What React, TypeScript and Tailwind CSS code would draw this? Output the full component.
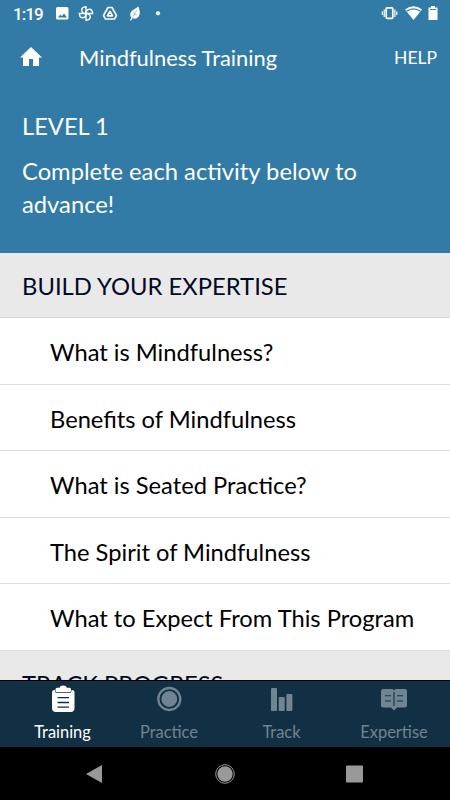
import { ReactNode } from "react";

const activities = [
  "What is Mindfulness?",
  "Benefits of Mindfulness",
  "What is Seated Practice?",
  "The Spirit of Mindfulness",
  "What to Expect From This Program",
];

const StatusBar = () => (
  <div className="flex h-7 items-center pl-[13px] pr-3">
    <span className="w-[43px] font-['Roboto',sans-serif] text-[17px] leading-7 font-medium tracking-[-0.900px]">
      1:19
    </span>
    <svg width="105" height="28" viewBox="56 0 105 28" fill="none">
      <path
        fill="#fff"
        fillRule="evenodd"
        d="M57.5 7h9.500q1.500 0 1.500 1.500v9.500q0 1.500-1.500 1.500h-9.500q-1.500 0-1.500-1.500v-9.500q0-1.500 1.500-1.500zM58 17.500h9l-3-4-2.200 2.700-1.500-1.700z"
      />
      <g stroke="#fff" strokeWidth="1.400">
        {[0, 90, 180, 270].map((angle) => (
          <path
            key={angle}
            transform={`rotate(${angle} 86 13.500)`}
            d="M86 13.500V6.800q-4.300.3-4.300 3.400 0 2.200 2.500 3.300H86"
          />
        ))}
      </g>
      <g stroke="#fff" strokeLinejoin="round">
        <path strokeWidth="1.600" d="M108 7.500h4l4.500 8-2 3.500h-9l-2-3.500z" />
        <path strokeWidth="1.700" d="M110 11.500l2.500 4.300h-5z" />
      </g>
      <path
        fill="#fff"
        d="M138.300 6.500q2.500 5.500.7 9.500-2.200 3.700-6.500 2.300l-1.500 2.500-1-.6 1.200-2.400q-2.400-4.300 1-7.300 2.800-1.500 6.100-4z"
      />
      <path stroke="#327ba6" strokeWidth=".4" d="M132.300 17.500l4.700-7.500M134 12v2.700M137 14.800h-3" />
      <circle cx="158" cy="13.300" r="2.100" fill="#fff" />
    </svg>
    <svg
      className="ml-auto"
      width="57"
      height="28"
      viewBox="381 0 57 28"
      fill="none"
    >
      <rect x="386.200" y="7.800" width="6.600" height="10.500" rx=".8" stroke="#fff" strokeWidth="1.700" />
      <path
        stroke="#fff"
        strokeWidth="1.200"
        d="M384.200 9.500v7.500M382.300 11.500v3.500M394.900 9.500v7.500M396.800 11.500v3.500"
      />
      <path fill="#fff" d="M413.500 20l-8.500-10.500q8.500-6.500 17 0z" />
      <path stroke="#327ba6" strokeWidth="1.200" d="M406.500 11.300q7-4.800 14 0" />
      <path
        fill="#fff"
        d="M431 6h4v1.500h2q.5 0 .5.500v11.500q0 .5-.5.500h-8q-.5 0-.5-.5V8q0-.5.500-.5h2z"
      />
      <path stroke="#327ba6" strokeWidth=".9" d="M430 9.500h6" />
    </svg>
  </div>
);

const Tab = ({
  label,
  active,
  className,
  children,
}: {
  label: string;
  active?: boolean;
  className: string;
  children: ReactNode;
}) => (
  <button
    className={`flex flex-col items-center ${className} ${
      active ? "text-white" : "text-[#718491]"
    }`}
  >
    <svg width="30" height="36" viewBox="0 0 30 36" fill="currentColor">
      {children}
    </svg>
    <span className="text-[16.400px] leading-[29px]">{label}</span>
  </button>
);

const App = () => {
  return (
    <div className="flex h-[800px] w-[450px] flex-col overflow-hidden bg-white font-['Lato',sans-serif]">
      <header className="h-[252.500px] shrink-0 bg-[#327ba6] text-white">
        <StatusBar />
        <div className="flex h-[60px] items-center pr-[13px] pl-5">
          <svg className="mb-0.5" width="22" height="20" viewBox="0 0 22 20" fill="#fff">
            <path d="M11 0L0 10.500h3V19h6v-7h4v7h6v-8.500h3z" />
          </svg>
          <h1 className="ml-[37px] text-[21.900px] leading-8">Mindfulness Training</h1>
          <button className="ml-auto text-[17.500px] leading-7">HELP</button>
        </div>
        <div className="px-[22px] pt-[22px]">
          <h2 className="text-[23.700px] leading-8">LEVEL 1</h2>
          <p className="mt-[13px] w-[370px] text-[23.750px] leading-[32.700px]">
            Complete each activity below to advance!
          </p>
        </div>
      </header>

      <main className="min-h-0 flex-1 overflow-hidden text-black">
        <h2 className="h-[65.500px] border-b border-[#d8d8d8] bg-[#e9e9e9] pl-[22px] text-[23.800px] leading-[66px] text-[#030b24]">
          BUILD YOUR EXPERTISE
        </h2>
        <ul>
          {activities.map((activity) => (
            <li
              key={activity}
              className="h-[66.600px] border-b border-[#dedede] pl-[50px] text-[23.700px] leading-[69px]"
            >
              {activity}
            </li>
          ))}
        </ul>
        <h2 className="h-[66px] bg-[#e9e9e9] pl-[22px] text-[23.700px] leading-[67px] text-[#030b24]">
          TRACK PROGRESS
        </h2>
      </main>

      <nav className="flex h-[67px] shrink-0 border-t border-black bg-[#123043]">
        <Tab label="Training" active className="w-[125px]">
          <path d="M6 9h1v1q0 2 2 2h12.500q2 0 2-2V9H24q2.500 0 2.500 2.500V27q0 4-4 4H8q-4 0-4-4V11.500Q4 9 6 9z" />
          <path d="M9 6.800h2.700q.3-2.300 3.500-2.300t3.500 2.300h2.800q1.500 0 1.500 1.500v1.500q0 1.500-1.500 1.500H9q-1.500 0-1.500-1.500V8.300q0-1.500 1.500-1.500z" />
          <path stroke="#123043" strokeWidth="1.300" d="M9.500 16.700h11.500M9.500 21.500h11.500M9.500 26.200h11.500" />
        </Tab>
        <Tab label="Practice" className="w-[88px]">
          <circle cx="15.300" cy="18" r="7.900" />
          <circle cx="15.300" cy="18" r="11" fill="none" stroke="currentColor" strokeWidth="2.300" />
        </Tab>
        <Tab label="Track" className="w-[137px]">
          <rect x="4" y="7" width="6" height="23" rx="1" />
          <rect x="11.700" y="16" width="6" height="14" rx="1" />
          <rect x="19.400" y="13" width="6" height="17" rx="1" />
        </Tab>
        <Tab label="Expertise" className="w-[88px]">
          <path d="M4 8h9q1.500 0 2 1.500Q15.500 8 17 8h9q2 0 2 2v14.500q0 2-2 2h-8L15 29.500l-3-3H4q-2 0-2-2V10q0-2 2-2z" />
          <path
            fill="none"
            stroke="#123043"
            strokeWidth="1.100"
            d="M15 11v14M6 14.700h6M6 20h6M18 14.700h6M18 20h6"
          />
        </Tab>
      </nav>

      <footer className="h-[53px] shrink-0 bg-black">
        <svg width="450" height="53" fill="#999">
          <path d="M86 27l16-9v18z" />
          <circle cx="225" cy="27" r="7.700" />
          <circle cx="225" cy="27" r="9.300" fill="none" stroke="#999" />
          <rect x="346" y="18.500" width="17" height="17" rx="1" />
        </svg>
      </footer>
    </div>
  );
};

export default App;
